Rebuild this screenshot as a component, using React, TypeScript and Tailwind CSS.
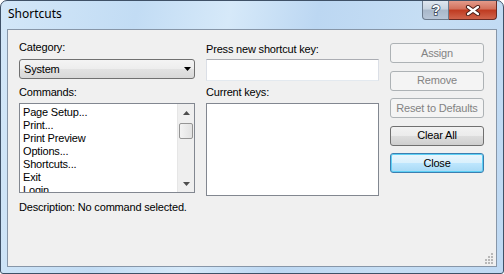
import React from 'react';

const commands = ['Page Setup...', 'Print...', 'Print Preview', 'Options...', 'Shortcuts...', 'Exit', 'Login...'];

function DialogButton({ label, kind }: { label: string; kind: 'disabled' | 'normal' | 'default' }) {
  const look =
    kind === 'disabled'
      ? 'border-[#adb2b5] bg-[#f4f4f4] text-[#838383]'
      : kind === 'default'
      ? 'border-[#3c7fb1] bg-[linear-gradient(#eaf6fd_0%,#d9f0fc_50%,#bee6fd_51%,#a7d9f5_100%)] text-black shadow-[inset_0_0_0_1px_#5ed0f5]'
      : 'border-[#707070] bg-[linear-gradient(#f2f2f2_0%,#ebebeb_50%,#dddddd_51%,#cfcfcf_100%)] text-black';
  return (
    <div className={`flex h-[20px] w-[94px] items-center justify-center rounded-[3px] border text-[11px] leading-[13px] ${look}`}>
      {label}
    </div>
  );
}

function Scrollbar() {
  return (
    <div className="flex w-[17px] flex-col border-l border-[#e6e6e6] bg-[#efefef]">
      <div className="flex h-[17px] items-center justify-center">
        <svg width="7" height="4" viewBox="0 0 7 4">
          <path d="M3.5 0L7 4H0Z" fill="#4d4d4d" />
        </svg>
      </div>
      <div className="mx-[1px] mt-[2px] h-[16px] rounded-[2px] border border-[#959595] bg-[linear-gradient(90deg,#f3f3f3,#e2e2e2)]" />
      <div className="flex-1" />
      <div className="flex h-[17px] items-center justify-center">
        <svg width="7" height="4" viewBox="0 0 7 4">
          <path d="M0 0H7L3.5 4Z" fill="#4d4d4d" />
        </svg>
      </div>
    </div>
  );
}

export default function App() {
  return (
    <div className="h-[274px] w-[504px] bg-white">
      <div className="flex h-[274px] w-[504px] flex-col rounded-t-[7px] rounded-b-[3px] border border-[#3f5167] bg-[linear-gradient(100deg,#d3e7f8_0%,#c2dcf4_25%,#d6e9f9_42%,#bcd7f2_58%,#c6def4_78%,#bfd9f3_100%)] font-['Liberation_Sans',Arial,sans-serif] text-black">
        <div className="flex h-[28px] shrink-0 items-start justify-between pl-[7px] pr-[6px]">
          <span className="pt-[5px] font-['Noto_Sans',sans-serif] text-[12px] leading-[16px] text-black">Shortcuts</span>
          <div className="flex">
            <div className="flex h-[19px] w-[27px] items-center justify-center rounded-bl-[4px] border border-t-0 border-[#6b7a8c] bg-[linear-gradient(#dfe7f0_0%,#c8d4e1_45%,#a9b8ca_50%,#b7c6d8_100%)]">
              <svg width="12" height="14" viewBox="0 0 12 14">
                <text x="6" y="12" textAnchor="middle" fontFamily="Liberation Sans, Arial, sans-serif" fontWeight="bold" fontSize="14" fill="#ffffff" stroke="#3b4a5c" strokeWidth="1.6" paintOrder="stroke">?</text>
              </svg>
            </div>
            <div className="flex h-[19px] w-[48px] items-center justify-center rounded-br-[4px] border border-l-0 border-t-0 border-[#6a2b24] bg-[linear-gradient(#e39a8a_0%,#d2705b_45%,#bf3a20_50%,#d0644c_100%)]">
              <svg width="16" height="11" viewBox="0 0 16 11">
                <path d="M3 2L13 9M13 2L3 9" stroke="#4a1d17" strokeWidth="4.2" strokeLinecap="round" />
                <path d="M3 2L13 9M13 2L3 9" stroke="#ffffff" strokeWidth="2.2" strokeLinecap="round" />
              </svg>
            </div>
          </div>
        </div>
        <div className="mx-[6px] flex-1 border border-[#8796a8] bg-[#f0f0f0]">
          <div className="relative flex h-full pl-[11px] pt-[11px] text-[11px] leading-[13px] tracking-[-0.18px]">
            <div className="flex w-[176px] flex-col">
              <div>Category:</div>
              <div className="mt-[5px] flex h-[20px] items-center justify-between rounded-[3px] border border-[#707070] bg-[linear-gradient(#f4f4f4_0%,#ededed_50%,#e2e2e2_51%,#d8d8d8_100%)] pl-[4px] pr-[3px]">
                <span>System</span>
                <svg width="7" height="4" viewBox="0 0 7 4">
                  <path d="M0 0H7L3.5 4Z" fill="#000000" />
                </svg>
              </div>
              <div className="mt-[7px]">Commands:</div>
              <div className="mt-[4px] flex h-[90px] border border-[#828790] bg-white">
                <div className="flex-1 overflow-hidden pl-[3px] pt-[2px]">
                  {commands.map((c) => (
                    <div key={c} className="h-[13px] whitespace-nowrap">{c}</div>
                  ))}
                </div>
                <Scrollbar />
              </div>
              <div className="mt-[8px] whitespace-nowrap">Description: No command selected.</div>
            </div>
            <div className="ml-[11px] flex w-[173px] flex-col pt-[2px]">
              <div>Press new shortcut key:</div>
              <div className="mt-[3px] h-[22px] border border-[#dbdfe6] border-t-[#abadb3] border-b-[#e3e9ef] bg-white" />
              <div className="mt-[5px]">Current keys:</div>
              <div className="mt-[4px] h-[93px] border border-[#828790] bg-white" />
            </div>
            <div className="ml-[11px] flex w-[94px] flex-col gap-[7.5px] pt-[2px]">
              <DialogButton label="Assign" kind="disabled" />
              <DialogButton label="Remove" kind="disabled" />
              <DialogButton label="Reset to Defaults" kind="disabled" />
              <DialogButton label="Clear All" kind="normal" />
              <DialogButton label="Close" kind="default" />
            </div>
            <svg className="absolute bottom-[2px] right-[2px]" width="11" height="11" viewBox="0 0 11 11">
              {[
                [8, 0], [8, 3], [5, 3], [8, 6], [5, 6], [2, 6], [8, 9], [5, 9], [2, 9],
              ].map(([x, y]) => (
                <rect key={`${x}-${y}`} x={x} y={y} width="2" height="2" fill="#b8b8b8" />
              ))}
            </svg>
          </div>
        </div>
        <div className="h-[6px] shrink-0" />
      </div>
    </div>
  );
}
